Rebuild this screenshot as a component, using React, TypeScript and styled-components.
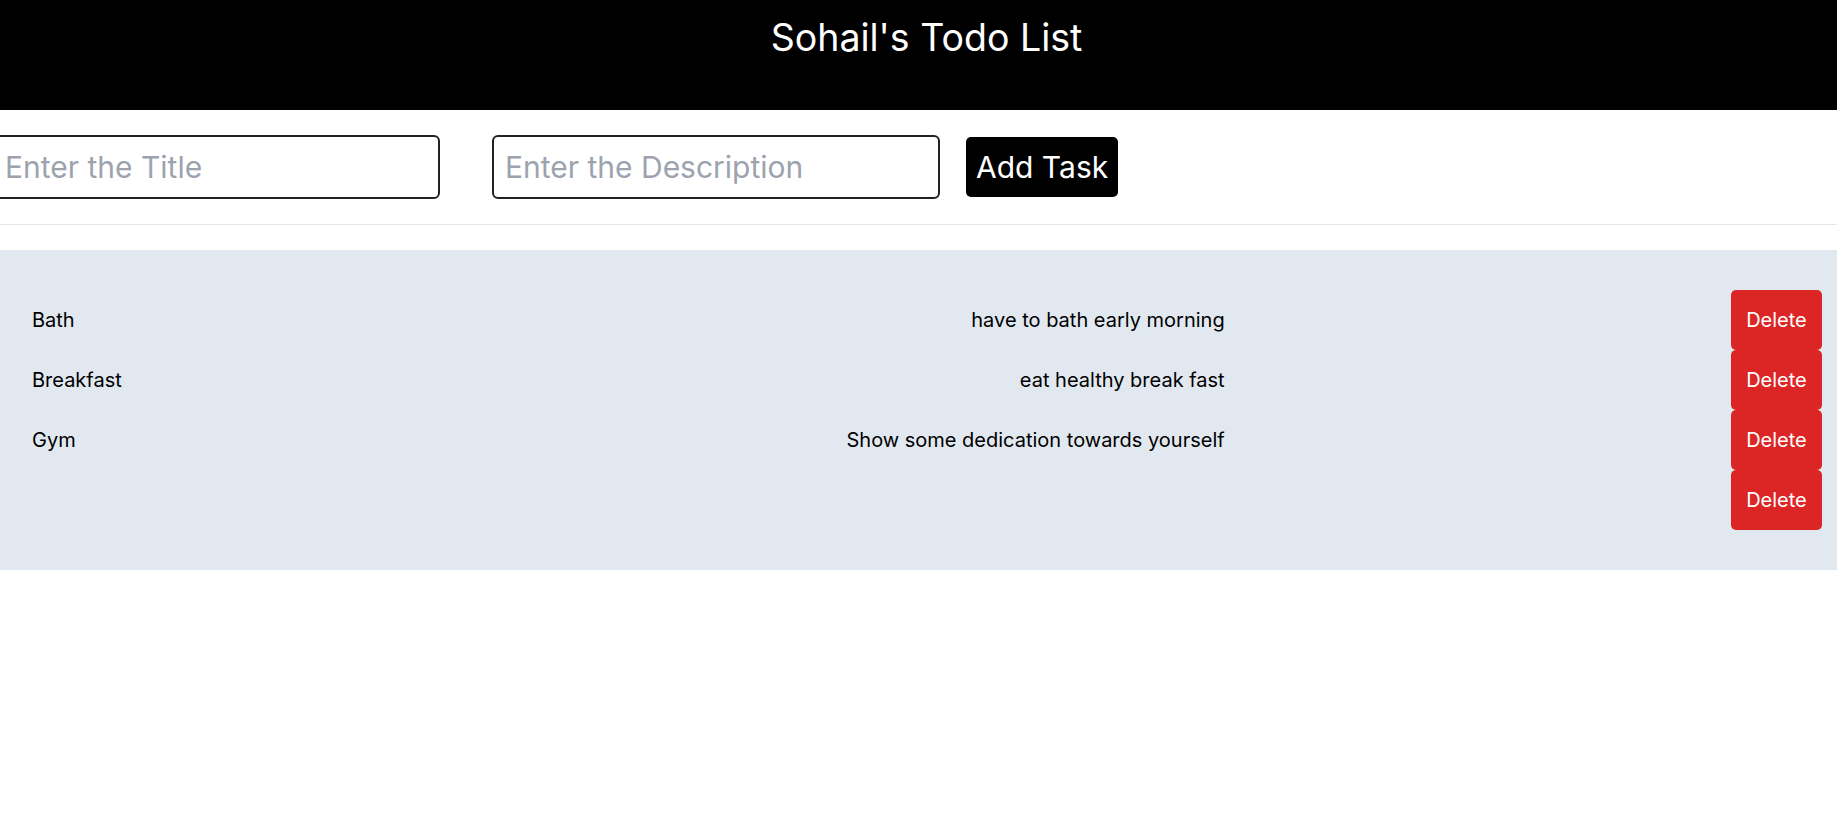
import React from "react";
import styled, { createGlobalStyle } from "styled-components";

const GlobalStyle = createGlobalStyle`
  html, body {
    margin: 0;
    padding: 0;
    background: #ffffff;
    font-family: Inter, "Noto Sans", sans-serif;
    overflow: hidden;
  }
  * { box-sizing: border-box; }
`;

const Header = styled.header`
  background: #000000;
  height: 110px;
  padding: 14px 0 0 16px;
  text-align: center;
`;

const Title = styled.h1`
  margin: 0;
  color: #ffffff;
  font-size: 37.5px;
  line-height: 48px;
  font-weight: 400;
`;

const Form = styled.div`
  display: flex;
  align-items: center;
  padding: 25px 0;
  margin-left: -8px;
  border-bottom: 1px solid #e5e7eb;
`;

const Input = styled.input<{ $gap: number }>`
  width: 448px;
  height: 64px;
  border: 2px solid #222222;
  border-radius: 6px;
  padding: 0 11px;
  font-family: Inter, sans-serif;
  font-size: 30px;
  color: #000;
  margin-right: ${(p) => p.$gap}px;
  outline: none;
  &::placeholder {
    color: #9ca3af;
  }
`;

const AddButton = styled.button`
  background: #000000;
  color: #ffffff;
  border: none;
  border-radius: 5px;
  height: 60px;
  padding: 0 10px;
  font-family: Inter, sans-serif;
  font-size: 30px;
  line-height: 40px;
  cursor: pointer;
`;

const Panel = styled.section`
  margin-top: 25px;
  background: #e2e8f0;
  padding: 40px 0;
`;

const Row = styled.div`
  display: grid;
  grid-template-columns: 1fr 1fr 1fr;
  align-items: center;
  height: 60px;
  font-size: 20px;
  color: #000;
`;

const TaskTitle = styled.div`
  padding-left: 32px;
`;

const TaskDesc = styled.div`
  text-align: right;
`;

const DeleteButton = styled.button`
  justify-self: end;
  margin-right: 15px;
  width: 91px;
  height: 60px;
  background: #dc2626;
  color: #ffffff;
  border: none;
  border-radius: 5px;
  font-family: Inter, sans-serif;
  font-size: 20px;
  cursor: pointer;
`;

const tasks = [
  { title: "Bath", desc: "have to bath early morning" },
  { title: "Breakfast", desc: "eat healthy break fast" },
  { title: "Gym", desc: "Show some dedication towards yourself" },
  { title: "", desc: "" },
];

export default function App() {
  return (
    <>
      <GlobalStyle />
      <Header>
        <Title>Sohail's Todo List</Title>
      </Header>
      <Form>
        <Input $gap={52} placeholder="Enter the Title" />
        <Input $gap={26} placeholder="Enter the Description" />
        <AddButton>Add Task</AddButton>
      </Form>
      <Panel>
        {tasks.map((t, i) => (
          <Row key={i}>
            <TaskTitle>{t.title}</TaskTitle>
            <TaskDesc>{t.desc}</TaskDesc>
            <DeleteButton>Delete</DeleteButton>
          </Row>
        ))}
      </Panel>
    </>
  );
}
